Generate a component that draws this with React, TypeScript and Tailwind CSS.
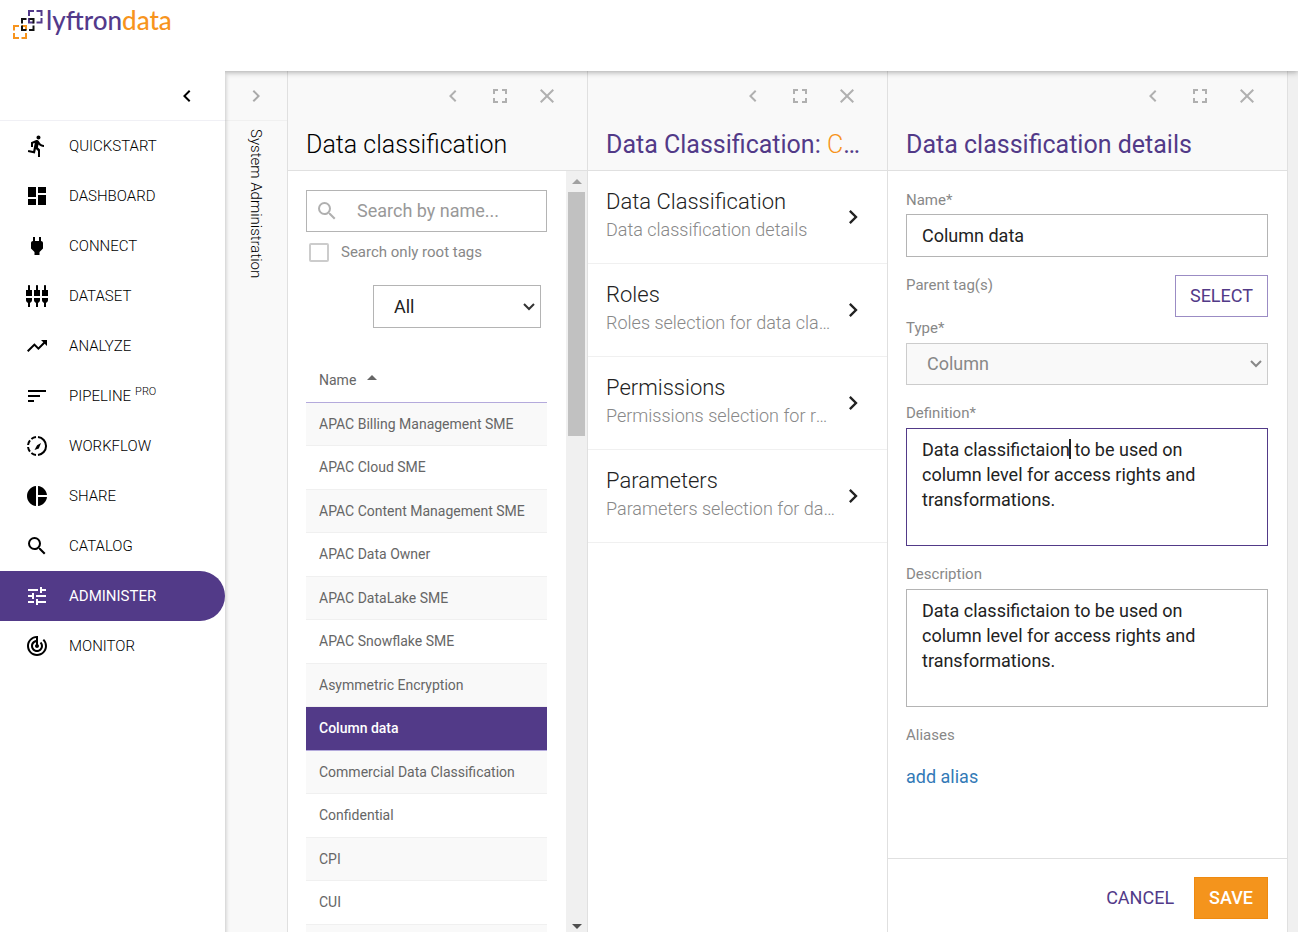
import React, { useState } from 'react';
import clsx from 'clsx';
import type { IconType } from 'react-icons';
import {
  MdArrowDropUp,
  MdChevronLeft,
  MdChevronRight,
  MdClose,
  MdDashboard,
  MdDirectionsRun,
  MdFullscreen,
  MdPieChart,
  MdPower,
  MdSearch,
  MdSettingsInputComponent,
  MdSort,
  MdTrackChanges,
  MdTrendingUp,
  MdTune,
} from 'react-icons/md';

type NavItem = { label: string; icon: IconType | typeof WorkflowIcon; badge?: string };

const NAV_ITEMS: NavItem[] = [
  { label: 'QUICKSTART', icon: MdDirectionsRun },
  { label: 'DASHBOARD', icon: MdDashboard },
  { label: 'CONNECT', icon: MdPower },
  { label: 'DATASET', icon: MdSettingsInputComponent },
  { label: 'ANALYZE', icon: MdTrendingUp },
  { label: 'PIPELINE', icon: MdSort, badge: 'PRO' },
  { label: 'WORKFLOW', icon: WorkflowIcon },
  { label: 'SHARE', icon: MdPieChart },
  { label: 'CATALOG', icon: MdSearch },
  { label: 'ADMINISTER', icon: MdTune },
  { label: 'MONITOR', icon: MdTrackChanges },
];

const TAGS = [
  'APAC Billing Management SME',
  'APAC Cloud SME',
  'APAC Content Management SME',
  'APAC Data Owner',
  'APAC DataLake SME',
  'APAC Snowflake SME',
  'Asymmetric Encryption',
  'Column data',
  'Commercial Data Classification',
  'Confidential',
  'CPI',
  'CUI',
];

const SECTIONS = [
  { title: 'Data Classification', text: 'Data classification details' },
  { title: 'Roles', text: 'Roles selection for data classification' },
  { title: 'Permissions', text: 'Permissions selection for roles' },
  { title: 'Parameters', text: 'Parameters selection for data classification' },
];

const DEFINITION = 'Data classifictaion to be used on column level for access rights and transformations.';

export default function App() {
  return (
    <div className="flex h-screen flex-col overflow-hidden bg-[#f0f0f0] font-['Roboto','Liberation_Sans',sans-serif] text-[#212121]">
      <header className="relative z-10 h-[71px] shrink-0 bg-white px-3 pt-2 shadow-[0_1px_6px_rgba(0,0,0,0.35)]">
        <Logo />
      </header>
      <div className="flex min-h-0 flex-1">
        <Sidebar />
        <CollapsedPanel />
        <TagListPanel />
        <SectionsPanel />
        <DetailsPanel />
      </div>
    </div>
  );
}

function Logo() {
  return (
    <a href="#home" aria-label="lyftrondata" className="flex w-fit items-start gap-0.5">
      <svg width="32" height="32" viewBox="0 0 32 32" fill="none" strokeWidth="2" aria-hidden="true">
        <path stroke="#f7941d" d="M7 18H2v4.500M2 25v5h5M9.500 30H14v-5M10 18h4v4" />
        <path stroke="#533a8b" d="M22 3h-5v5M17 10v4.500h4.500M24.500 14.500h5V10M24.500 3h5v5" />
        <path stroke="#111" d="M14.500 11H10v4.500M10 17.500V22h4.500M17 22h4.500v-4.500M17.500 11h4v4.500" />
      </svg>
      <span className="font-['Lato',sans-serif] text-[26px] leading-[25px] font-medium text-[#533a8b]">
        lyftron<span className="text-[#f7941d]">data</span>
      </span>
    </a>
  );
}

function WorkflowIcon({ className }: { className?: string }) {
  return (
    <svg viewBox="0 0 24 24" className={className} fill="none" stroke="currentColor" strokeWidth="2" aria-hidden="true">
      <path d="M13 3.05a9 9 0 0 1 0 17.9M11 3.05a9 9 0 0 0-4.6 1.9M5 6.4a9 9 0 0 0-1.95 4.6M3.05 13a9 9 0 0 0 1.9 4.6M6.4 19a9 9 0 0 0 4.6 1.95" />
      <path d="M16 9l-2.200 5.400-4.300 1.600 2.600-4.800z" fill="currentColor" stroke="none" />
    </svg>
  );
}

function Sidebar() {
  return (
    <nav className="relative z-20 flex w-[225px] shrink-0 flex-col bg-white shadow-[1px_4px_4px_rgba(0,0,0,0.2)]">
      <div className="flex h-[50px] shrink-0 items-center justify-end border-b border-[#f0f0f5] pr-[26px]">
        <button type="button" aria-label="Collapse menu">
          <MdChevronLeft className="h-6 w-6 text-black" />
        </button>
      </div>
      <ul>
        {NAV_ITEMS.map(({ label, icon: Icon, badge }) => {
          const active = label === 'ADMINISTER';
          return (
            <li key={label}>
              <a
                href={`#${label.toLowerCase()}`}
                className={clsx(
                  'flex h-[50px] items-center gap-5 pl-[25px] text-[15px]',
                  active ? 'rounded-r-full bg-[#523a88] text-white' : 'font-light text-black',
                )}
              >
                <Icon className="h-6 w-6" />
                <span>
                  {label}
                  {badge && <sup className="ml-1 text-[11px]">{badge}</sup>}
                </span>
              </a>
            </li>
          );
        })}
      </ul>
    </nav>
  );
}

function CollapsedPanel() {
  return (
    <aside className="flex w-[63px] shrink-0 flex-col border-r border-[#e0e0e0] bg-[#f9f9f9]">
      <div className="flex h-[50px] shrink-0 items-center justify-center border-b border-[#f0f0f0]">
        <button type="button" aria-label="Expand panel">
          <MdChevronRight className="h-6 w-6 text-[#aaa]" />
        </button>
      </div>
      <span className="mt-2 self-center text-[15px] font-light text-black [writing-mode:vertical-rl]">System Administration</span>
    </aside>
  );
}

function PanelHeader({ children }: { children: React.ReactNode }) {
  return (
    <div className="h-[100px] shrink-0 border-b border-[#e0e0e0] bg-[#f9f9f9] pt-[13px]">
      <div className="flex justify-end gap-[23px] pr-7 text-[#b0b0b0]">
        <button type="button" aria-label="Back">
          <MdChevronLeft className="h-6 w-6" />
        </button>
        <button type="button" aria-label="Full screen">
          <MdFullscreen className="h-6 w-6" />
        </button>
        <button type="button" aria-label="Close">
          <MdClose className="h-6 w-6" />
        </button>
      </div>
      <div className="mt-[21px] pr-6 pl-[18px] text-[25px] leading-8">{children}</div>
    </div>
  );
}

function TagListPanel() {
  const [selected, setSelected] = useState('Column data');

  return (
    <section className="flex w-[300px] shrink-0 flex-col border-r border-[#e0e0e0] bg-white">
      <PanelHeader>
        <h2 className="truncate font-light text-black">Data classification</h2>
      </PanelHeader>
      <div className="flex min-h-0 flex-1">
        <div className="min-w-0 flex-1 overflow-hidden pt-[19px] pr-[19px] pl-[18px]">
          <div className="flex h-[42px] items-center border border-[#b4b4b4] pl-2">
            <MdSearch className="h-6 w-6 shrink-0 text-[#b0b0b0]" />
            <input
              type="search"
              aria-label="Search by name"
              placeholder="Search by name..."
              className="min-w-0 flex-1 pl-[18px] text-lg outline-none placeholder:text-[#999]"
            />
          </div>
          <label className="mt-2.5 flex h-5 items-center gap-3 pl-[3px] text-[15px] text-[#888]">
            <input type="checkbox" className="h-[19px] w-5 appearance-none rounded-xs border-2 border-[#ccc]" />
            Search only root tags
          </label>
          <div className="relative mt-[23px] mr-1.5 ml-auto h-[43px] w-[168px]">
            <select aria-label="Filter tags" className="h-full w-full appearance-none border border-[#b4b4b4] px-5 text-lg">
              <option>All</option>
            </select>
            <SelectArrow className="text-[#333]" />
          </div>
          <table className="mt-[31px] w-full text-left text-sm text-[#666]">
            <thead>
              <tr className="h-[43px] border-b border-[#b4aadc]">
                <th className="px-[13px] font-normal">
                  <button type="button" className="flex items-center gap-1">
                    Name
                    <MdArrowDropUp className="mb-1 h-6 w-6" />
                  </button>
                </th>
              </tr>
            </thead>
            <tbody>
              {TAGS.map((tag) => (
                <tr
                  key={tag}
                  onClick={() => setSelected(tag)}
                  className={clsx(
                    'cursor-pointer border-b odd:h-[43px] even:h-[44px]',
                    tag === selected ? 'border-[#b4aadc] bg-[#523a88] font-medium text-white' : 'border-[#f0f0f0] odd:bg-[#f9f9f9]',
                  )}
                >
                  <td className="px-[13px]">{tag}</td>
                </tr>
              ))}
            </tbody>
          </table>
          <div className="h-11 bg-[#f9f9f9]" />
        </div>
        <div className="flex w-[21px] shrink-0 flex-col items-center justify-between bg-[#f0f0f0] pb-[3px]" aria-hidden="true">
          <div className="flex flex-col items-center">
            <div className="flex h-[21px] items-center">
              <svg viewBox="0 0 10 5" className="h-[5px] w-2.5 text-[#a0a0a0]" fill="currentColor">
                <path d="M0 5l5-5 5 5z" />
              </svg>
            </div>
            <div className="h-[244px] w-[17px] bg-[#c1c1c1]" />
          </div>
          <svg viewBox="0 0 10 5" className="h-[5px] w-2.5 text-[#505050]" fill="currentColor">
            <path d="M0 0l5 5 5-5z" />
          </svg>
        </div>
      </div>
    </section>
  );
}

function SelectArrow({ className }: { className?: string }) {
  return (
    <svg
      viewBox="0 0 12 8"
      className={clsx('pointer-events-none absolute top-1/2 right-1.5 h-2 w-3 -translate-y-1/2', className)}
      fill="none"
      stroke="currentColor"
      strokeWidth="2"
      aria-hidden="true"
    >
      <path d="M1 1l5 5 5-5" />
    </svg>
  );
}

function SectionsPanel() {
  return (
    <section className="flex w-[300px] shrink-0 flex-col border-r border-[#e0e0e0] bg-white">
      <PanelHeader>
        <h2 className="truncate text-[#523a88]">
          Data Classification: <span className="font-light text-[#f7941d]">Column data</span>
        </h2>
      </PanelHeader>
      <ul>
        {SECTIONS.map(({ title, text }) => (
          <li key={title}>
            <button type="button" className="flex h-[93px] w-full items-center gap-1 border-b border-[#f0f0f0] pr-5 pl-[18px] text-left font-light">
              <span className="min-w-0 flex-1 pb-0.5">
                <span className="block text-[22px] leading-7 text-[#222]">{title}</span>
                <span className="block truncate text-lg leading-7 text-[#888]">{text}</span>
              </span>
              <MdChevronRight className="h-7 w-7 shrink-0 text-[#222]" />
            </button>
          </li>
        ))}
      </ul>
    </section>
  );
}

function DetailsPanel() {
  const [showCaret, setShowCaret] = useState(true);

  return (
    <section className="mr-2.5 flex min-w-0 flex-1 flex-col border-r border-[#e0e0e0] bg-white">
      <PanelHeader>
        <h2 className="truncate text-[#523a88]">Data classification details</h2>
      </PanelHeader>
      <form className="flex min-h-0 flex-1 flex-col" onSubmit={(event) => event.preventDefault()}>
        <div className="flex min-h-0 flex-1 flex-col overflow-hidden pt-[19px] pr-[19px] pl-[18px] text-[15px] leading-5 text-[#888]">
          <label htmlFor="name">Name*</label>
          <input
            id="name"
            defaultValue="Column data"
            className="mt-1 h-[43px] shrink-0 border border-[#b4b4b4] px-[15px] text-lg text-[#222] outline-none"
          />
          <div className="mt-[18px] flex h-[43px] shrink-0 items-start justify-between">
            <span>Parent tag(s)</span>
            <button type="button" className="h-[42px] border border-[#9b8cc4] px-3.5 text-lg text-[#523a88]">
              SELECT
            </button>
          </div>
          <label htmlFor="type">Type*</label>
          <div className="relative mt-[5px] h-[42px] shrink-0">
            <select id="type" disabled className="h-full w-full appearance-none border border-[#ccc] bg-[#f9f9f9] px-5 text-lg">
              <option>Column</option>
            </select>
            <SelectArrow />
          </div>
          <label htmlFor="definition" className="mt-[18px]">Definition*</label>
          <div className="relative mt-[5px] h-[118px] shrink-0">
            <textarea
              id="definition"
              defaultValue={DEFINITION}
              onFocus={() => setShowCaret(false)}
              className="block h-full w-full resize-none border border-[#523a88] py-2 pr-[60px] pl-[15px] text-lg leading-[25px] text-[#222] outline-none"
            />
            {showCaret && <span className="pointer-events-none absolute top-[11px] left-[163px] h-5 w-0.5 bg-[#222]" />}
          </div>
          <label htmlFor="description" className="mt-[18px]">Description</label>
          <textarea
            id="description"
            defaultValue={DEFINITION}
            className="mt-[5px] h-[118px] shrink-0 resize-none border border-[#b4b4b4] py-2 pr-[60px] pl-[15px] text-lg leading-[25px] text-[#222] outline-none"
          />
          <span className="mt-[18px]">Aliases</span>
          <a href="#add-alias" className="mt-[18px] w-fit text-lg text-[#337ab7]">
            add alias
          </a>
        </div>
        <div className="flex shrink-0 items-center justify-end gap-1 border-t border-[#e0e0e0] pt-[18px] pr-[19px] pb-[13px] text-lg">
          <button type="button" className="h-[42px] px-4 text-[#523a88]">
            CANCEL
          </button>
          <button type="submit" className="h-[42px] border border-[#ef8a10] bg-[#f4941c] px-3.5 font-medium text-white">
            SAVE
          </button>
        </div>
      </form>
    </section>
  );
}
